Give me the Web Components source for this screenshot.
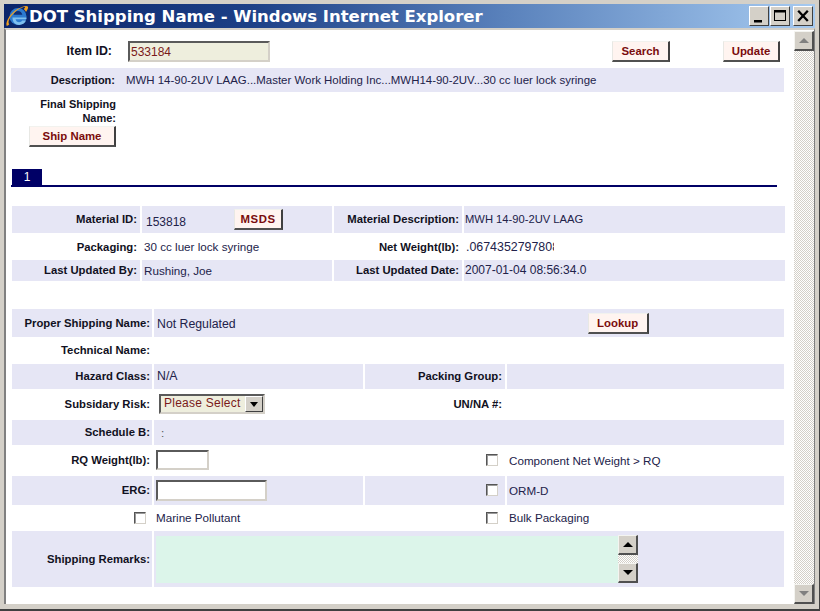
<!DOCTYPE html>
<html>
<head>
<meta charset="utf-8">
<title>DOT Shipping Name</title>
<style>
  html, body { margin: 0; padding: 0; height: 100%; overflow: hidden; background: #d4d0c8; }
  body { font-family: "Liberation Sans", Arial, sans-serif; font-size: 11.65px; }
</style>
</head>
<body>
<ie-window caption="DOT Shipping Name - Windows Internet Explorer">
  <top-bar>
    <form-cell kind="label" style="width:101px;font-size:12.4px">Item ID:</form-cell>
    <text-box value="533184" width="142" tinted style="margin-left:14px"></text-box>
    <ui-button style="margin-left:342px;width:58px">Search</ui-button>
    <ui-button style="margin-left:53px;width:57px">Update</ui-button>
  </top-bar>
  <form-row shaded h="24" cols="106px 1fr" style="--x:-1px;--r:1px">
    <form-cell kind="label" style="font-size:11px">Description:</form-cell>
    <form-cell pad="9" style="font-size:11.45px">MWH 14-90-2UV LAAG...Master Work Holding Inc...MWH14-90-2UV...30 cc luer lock syringe</form-cell>
  </form-row>
  <ship-name></ship-name>
  <tab-strip label="1"></tab-strip>

  <form-table style="margin-top:19px;--lab:3px">
    <form-row shaded h="27" gap="2" cols="128px 190px 128px 1fr">
      <form-cell kind="label">Material ID:</form-cell>
      <form-cell pad="4"><span style="font-size:12px;margin-top:5px">153818</span><ui-button style="margin-left:48px;width:49px;letter-spacing:.5px;margin-top:1px">MSDS</ui-button></form-cell>
      <form-cell kind="label">Material Description:</form-cell>
      <form-cell pad="1" style="font-size:11.2px">MWH 14-90-2UV LAAG</form-cell>
    </form-row>
    <form-row h="26" gap="2" cols="128px 190px 128px 1fr" style="margin-top:1px">
      <form-cell kind="label">Packaging:</form-cell>
      <form-cell pad="2">30 cc luer lock syringe</form-cell>
      <form-cell kind="label">Net Weight(lb):</form-cell>
      <form-cell pad="1"><span style="width:88px;overflow:hidden;white-space:nowrap;padding-left:1px;font-size:12.4px">.0674352797808</span></form-cell>
    </form-row>
    <form-row shaded h="21" gap="2" cols="128px 190px 128px 1fr">
      <form-cell kind="label">Last Updated By:</form-cell>
      <form-cell pad="2">Rushing, Joe</form-cell>
      <form-cell kind="label">Last Updated Date:</form-cell>
      <form-cell pad="1" style="font-size:12px">2007-01-04 08:56:34.0</form-cell>
    </form-row>
  </form-table>

  <form-table style="margin-top:28px;margin-right:1px">
    <form-row shaded h="28" gap="2" cols="140px 1fr">
      <form-cell kind="label">Proper Shipping Name:</form-cell>
      <form-cell pad="3"><span style="font-size:12.3px;margin-top:2px">Not Regulated</span><ui-button style="margin-left:352px;width:61px;margin-top:1px">Lookup</ui-button></form-cell>
    </form-row>
    <form-row h="27" gap="2" cols="140px 1fr">
      <form-cell kind="label">Technical Name:</form-cell>
      <form-cell></form-cell>
    </form-row>
    <form-row shaded h="25" gap="2" cols="140px 209px 140px 1fr">
      <form-cell kind="label">Hazard Class:</form-cell>
      <form-cell pad="3"><span style="font-size:12.3px">N/A</span></form-cell>
      <form-cell kind="label" style="--lab:3px">Packing Group:</form-cell>
      <form-cell></form-cell>
    </form-row>
    <form-row h="31" gap="2" cols="140px 209px 140px 1fr">
      <form-cell kind="label">Subsidary Risk:</form-cell>
      <form-cell pad="5"><select-box value="Please Select"></select-box></form-cell>
      <form-cell kind="label" style="--lab:3px">UN/NA #:</form-cell>
      <form-cell></form-cell>
    </form-row>
    <form-row shaded h="25" gap="2" cols="140px 1fr">
      <form-cell kind="label">Schedule B:</form-cell>
      <form-cell pad="7"><span style="color:#555">:</span></form-cell>
    </form-row>
    <form-row h="31" gap="2" cols="140px 209px 140px 1fr">
      <form-cell kind="label">RQ Weight(lb):</form-cell>
      <form-cell pad="2"><text-box width="53" style="height:20px"></text-box></form-cell>
      <form-cell kind="check" style="--c:7px"><check-box></check-box></form-cell>
      <form-cell pad="2">Component Net Weight &gt; RQ</form-cell>
    </form-row>
    <form-row shaded h="29" gap="2" cols="140px 209px 140px 1fr">
      <form-cell kind="label">ERG:</form-cell>
      <form-cell pad="2"><text-box width="111"></text-box></form-cell>
      <form-cell kind="check" style="--c:7px"><check-box></check-box></form-cell>
      <form-cell pad="2">ORM-D</form-cell>
    </form-row>
    <form-row h="26" gap="2" cols="140px 209px 140px 1fr">
      <form-cell kind="check"><check-box></check-box></form-cell>
      <form-cell pad="2">Marine Pollutant</form-cell>
      <form-cell kind="check" style="--c:7px"><check-box></check-box></form-cell>
      <form-cell pad="2">Bulk Packaging</form-cell>
    </form-row>
    <form-row shaded h="56" gap="2" cols="140px 1fr">
      <form-cell kind="label">Shipping Remarks:</form-cell>
      <form-cell pad="2" style="padding-bottom:0"><remarks-box></remarks-box></form-cell>
    </form-row>
  </form-table>
</ie-window>

<script>
// window frame: caption, buttons, scrollbar
class IeWindow extends HTMLElement {
  constructor() {
    super();
    this.attachShadow({ mode: 'open' }).innerHTML = `
      <style>
        :host { display: flex; flex-direction: column; width: 820px; height: 611px; box-sizing: border-box;
          padding: 4px 4px 5px 4px; background: #d4d0c8; border-right: 1px solid #404040; border-bottom: 2px solid #404040; }
        .cap { flex: none; height: 24px; display: flex; align-items: center;
          background: linear-gradient(90deg, #0a246a 0%, #1c3f86 30%, #5a82bc 62%, #a6caf0 100%); }
        .cap svg.logo { flex: none; margin: 0 0 0 1px; }
        .cap b { margin-left: 0; font: bold 16.5px "DejaVu Sans", Verdana, sans-serif; color: #fff; white-space: nowrap; }
        .btns { margin-left: auto; display: flex; margin-right: 2px; }
        .btns win-button:last-child { margin-left: 3px; }
        .btns win-button:nth-child(2) { margin-left: 1px; }
        .client { flex: 1; display: flex; min-height: 0; border-left: 2px solid #808080; border-top: 2px solid #d4d0c8;
          border-right: 1px solid #808080; background: #fff; }
        .inner { flex: 1; min-width: 0; padding-left: 6px; padding-right: 9px; overflow: hidden; }
        win-scroll { margin-top: 1px; }
      </style>
      <div class="cap">
        <svg class="logo" width="24" height="24" viewBox="0 0 24 24">
          <ellipse cx="13" cy="12.500" rx="8.500" ry="8.500" fill="#2c7ad0"/>
          <path d="M8.500 10.800c.6-2.500 2.300-3.900 4.500-3.900 2.300 0 3.900 1.500 4.300 3.900z" fill="#0f2f78"/>
          <path d="M7.500 13.500h14v1.800H10.600c.4 2 1.700 3 3.500 3 1.400 0 2.500-.6 3-1.700h4c-1 2.800-3.700 4.400-7 4.400-4 0-6.600-2.900-6.600-7.500z" fill="#7fc0f0"/>
          <path d="M1.500 21.500C.5 17 6 8.500 13 4.800 17.500 2.400 21.500 1.200 22.800 2.500c.9 1-.2 3.200-1.800 5.500-.7-1.500-1.300-2.200-2.200-3.100 1.100-.9 1.500-1.400 1.200-1.700-1-.8-7 1.700-11.700 6.500C3.800 14.300 2.600 18.500 4.300 20.300c-.9 1.200-2 1.800-2.800 1.200z" fill="#f0a020"/>
        </svg>
        <b></b>
        <div class="btns">
          <win-button kind="min"></win-button>
          <win-button kind="max"></win-button>
          <win-button kind="close"></win-button>
        </div>
      </div>
      <div class="client">
        <div class="inner"><slot></slot></div>
        <win-scroll page></win-scroll>
      </div>`;
    this.shadowRoot.querySelector('b').textContent = this.getAttribute('caption');
  }
}

class WinButton extends HTMLElement {
  constructor() {
    super();
    const icons = {
      min: '<rect x="3" y="12" width="8" height="2.500" fill="#000"/>',
      max: '<rect x="2.500" y="2.500" width="11" height="10" fill="none" stroke="#000"/><rect x="2" y="2" width="12" height="2.500" fill="#000"/>',
      close: '<path d="M3.200 2.800 12.800 13M12.800 2.800 3.200 13" stroke="#000" stroke-width="2.300" fill="none"/>'
    };
    this.attachShadow({ mode: 'open' }).innerHTML = `
      <style>
        :host { display: block; width: 20px; height: 20px; box-sizing: border-box; background: #d4d0c8;
          border: 1px solid; border-color: #fff #404040 #404040 #fff; }
        svg { display: block; margin: 1px; }
      </style>
      <svg width="16" height="16" viewBox="0 0 16 16">${icons[this.getAttribute('kind')]}</svg>`;
  }
}

// hatched scrollbar, used for the page and for the remarks box
class WinScroll extends HTMLElement {
  constructor() {
    super();
    const grey = this.hasAttribute('page') ? '#808080' : '#000';
    this.attachShadow({ mode: 'open' }).innerHTML = `
      <style>
        :host { flex: none; display: flex; flex-direction: column; width: 20px; box-sizing: border-box;
          background: repeating-conic-gradient(#d4d0c8 0 25%, #fff 0 50%) 0 0 / 2px 2px; }
        .b { flex: none; height: 20px; box-sizing: border-box; background: #d4d0c8; border: solid;
          border-width: 1px 2px 2px 1px; border-color: #f4f4f0 #505050 #505050 #f4f4f0;
          display: flex; align-items: center; justify-content: center; }
        .t { flex: 1; }
        i { width: 0; height: 0; border: 5px solid transparent; }
        .up i { border-bottom-color: ${grey}; border-top-width: 0; }
        .dn i { border-top-color: ${grey}; border-bottom-width: 0; }
      </style>
      <div class="b up"><i></i></div><div class="t"></div><div class="b dn"><i></i></div>`;
  }
}

class TopBar extends HTMLElement {
  constructor() {
    super();
    this.attachShadow({ mode: 'open' }).innerHTML = `
      <style>:host { display: flex; align-items: center; height: 38px; box-sizing: border-box; margin-left: 1px; padding-top: 5px; }</style>
      <slot></slot>`;
  }
}

class FormTable extends HTMLElement {
  constructor() {
    super();
    this.attachShadow({ mode: 'open' }).innerHTML = `
      <style>:host { display: block; }</style><slot></slot>`;
  }
}

class FormRow extends HTMLElement {
  constructor() {
    super();
    this.attachShadow({ mode: 'open' }).innerHTML = `
      <style>
        :host { display: grid; height: var(--h); grid-template-columns: var(--cols); column-gap: var(--gap, 0);
          margin-left: var(--x, 0); margin-right: var(--r, 0); }
        :host([shaded]) { --cell-bg: #e6e6f5; }
      </style>
      <slot></slot>`;
    this.style.setProperty('--h', this.getAttribute('h') + 'px');
    this.style.setProperty('--cols', this.getAttribute('cols'));
    this.style.setProperty('--gap', (this.getAttribute('gap') || 0) + 'px');
  }
}

class FormCell extends HTMLElement {
  constructor() {
    super();
    this.attachShadow({ mode: 'open' }).innerHTML = `
      <style>
        :host { display: flex; align-items: center; min-width: 0; box-sizing: border-box; background: var(--cell-bg, transparent);
          color: #22224a; font-size: 11.65px; white-space: nowrap; padding-bottom: 1px; }
        :host([kind=label]) { justify-content: flex-end; font-weight: bold; font-size: 11.3px; color: #111122; padding-right: var(--lab, 2px); }
        :host([kind=check]) { justify-content: flex-end; padding-right: var(--c, 6px); }
      </style>
      <slot></slot>`;
    if (this.hasAttribute('pad')) this.style.paddingLeft = this.getAttribute('pad') + 'px';
  }
}

class UiButton extends HTMLElement {
  constructor() {
    super();
    this.attachShadow({ mode: 'open' }).innerHTML = `
      <style>
        :host { flex: none; display: flex; align-items: center; justify-content: center; height: 21px; box-sizing: border-box;
          background: #fff4f0; color: #7a0c0c; font: bold 11.4px "Liberation Sans", Arial, sans-serif;
          border: solid; border-color: #f2f2ee #404040 #505050 #e8e8e4; border-width: 1px 2px 2px 1px; }
      </style>
      <slot></slot>`;
  }
}

class TextBox extends HTMLElement {
  constructor() {
    super();
    this.attachShadow({ mode: 'open' }).innerHTML = `
      <style>
        :host { flex: none; display: flex; align-items: center; height: 21px; box-sizing: border-box; padding-left: 1px;
          background: #fff; color: #7a1a1a; font: 12px "Liberation Sans", Arial, sans-serif;
          border: 2px solid; border-color: #5a5a5a #d4d0c8 #d4d0c8 #5a5a5a; }
        :host([tinted]) { background: #eeeedd; }
      </style>
      <span></span>`;
    this.style.width = this.getAttribute('width') + 'px';
    this.shadowRoot.querySelector('span').textContent = this.getAttribute('value') || '';
  }
}

class SelectBox extends HTMLElement {
  constructor() {
    super();
    this.attachShadow({ mode: 'open' }).innerHTML = `
      <style>
        :host { flex: none; display: flex; width: 106px; height: 20px; box-sizing: border-box;
          background: #eeeedd; color: #7a1a1a; font: 12px "Liberation Sans", Arial, sans-serif;
          border: 2px solid; border-color: #5a5a5a #d4d0c8 #d4d0c8 #5a5a5a; }
        span { flex: 1; padding-left: 3px; line-height: 15px; letter-spacing: .25px; }
        .a { width: 18px; background: #d4d0c8; border: 1px solid; border-color: #fff #404040 #404040 #fff;
          box-sizing: border-box; display: flex; align-items: center; justify-content: center; }
        i { width: 0; height: 0; border: 4px solid transparent; border-top: 5px solid #000; border-bottom: 0; }
      </style>
      <span></span><div class="a"><i></i></div>`;
    this.shadowRoot.querySelector('span').textContent = this.getAttribute('value');
  }
}

class CheckBox extends HTMLElement {
  constructor() {
    super();
    this.attachShadow({ mode: 'open' }).innerHTML = `
      <style>
        :host { flex: none; display: block; width: 12px; height: 12px; box-sizing: border-box; background: #fff;
          border: 1px solid; border-color: #555 #d4d0c8 #d4d0c8 #555; box-shadow: inset 1px 1px 0 #999; }
      </style>`;
  }
}

class RemarksBox extends HTMLElement {
  constructor() {
    super();
    this.attachShadow({ mode: 'open' }).innerHTML = `
      <style>
        :host { display: flex; align-items: stretch; height: 48px; }
        .a { width: 462px; background: #dcf5ea; margin-top: 1px; }
        win-scroll { height: 48px; }
      </style>
      <div class="a"></div><win-scroll></win-scroll>`;
  }
}

class ShipName extends HTMLElement {
  constructor() {
    super();
    this.attachShadow({ mode: 'open' }).innerHTML = `
      <style>
        :host { display: block; width: 104px; padding-top: 5px; font: bold 11px/14px "Liberation Sans", Arial, sans-serif; color: #111122; text-align: right; }
        ui-button { margin: 1px 0 0 17px; width: 87px; }
      </style>
      <div>Final Shipping<br>Name:</div>
      <ui-button>Ship Name</ui-button>`;
  }
}

class TabStrip extends HTMLElement {
  constructor() {
    super();
    this.attachShadow({ mode: 'open' }).innerHTML = `
      <style>
        :host { display: block; margin: 22px 8px 0 -1px; border-bottom: 2px solid #000066; height: 16px; }
        div { width: 30px; height: 16px; margin-left: 1px; background: #000066; color: #fff; text-align: center;
          font: 12px/16px "Liberation Sans", Arial, sans-serif; }
      </style>
      <div></div>`;
    this.shadowRoot.querySelector('div').textContent = this.getAttribute('label');
  }
}

customElements.define('win-button', WinButton);
customElements.define('win-scroll', WinScroll);
customElements.define('ie-window', IeWindow);
customElements.define('top-bar', TopBar);
customElements.define('form-table', FormTable);
customElements.define('form-row', FormRow);
customElements.define('form-cell', FormCell);
customElements.define('ui-button', UiButton);
customElements.define('text-box', TextBox);
customElements.define('select-box', SelectBox);
customElements.define('check-box', CheckBox);
customElements.define('remarks-box', RemarksBox);
customElements.define('ship-name', ShipName);
customElements.define('tab-strip', TabStrip);
</script>
</body>
</html>
